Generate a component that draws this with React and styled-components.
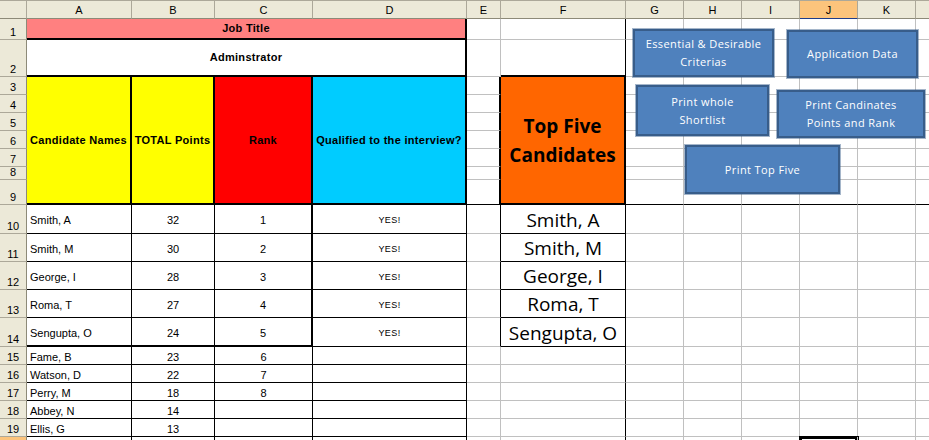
import React from 'react';
import styled, { createGlobalStyle } from 'styled-components';

const GlobalStyle = createGlobalStyle`
  html, body { margin: 0; padding: 0; background: #fff; overflow: hidden; }
  #root { width: 929px; height: 440px; overflow: hidden; }
`;

const COL_WIDTHS = [27, 105, 83, 98, 154, 34, 125, 58, 58, 58, 58, 58, 58];
const LETTERS = ['A', 'B', 'C', 'D', 'E', 'F', 'G', 'H', 'I', 'J', 'K', 'L'];
const ROW_HEIGHTS = [21, 37, 18, 18, 18, 18, 18, 13, 25, 29, 28, 28, 28, 29, 18, 18, 18, 18, 18, 18];
const VISIBLE_COLS = 11; // columns whose label is inside the 929px window
const VISIBLE_ROWS = 19; // rows whose label is inside the 440px window

const line = (v) =>
  v === 'thick' ? '2px solid #000' : v === 'thin' ? '1px solid #000' : v === 'none' ? '0' : '1px solid #c0c0c0';

const Canvas = styled.div`
  position: relative;
  width: 929px;
  height: 440px;
  overflow: hidden;
`;

const Sheet = styled.div`
  display: grid;
  grid-template-columns: ${COL_WIDTHS.map((w) => w + 'px').join(' ')};
  grid-template-rows: 19px ${ROW_HEIGHTS.map((h) => h + 'px').join(' ')};
  width: max-content;
  font-family: "Liberation Sans", Arial, sans-serif;
  color: #000;
`;

const HeadBase = styled.div`
  box-sizing: border-box;
  grid-row: ${(p) => p.$row};
  grid-column: ${(p) => p.$col};
  background: ${(p) => (p.$selected ? '#fcc47c' : '#ece9d8')};
  font-size: 11px;
  line-height: 13px;
  display: flex;
  justify-content: center;
`;

const Corner = styled(HeadBase)`
  border-right: 1px solid #aca899;
  border-bottom: 1px solid #8d8a78;
  border-top: 1px solid #aca899;
`;

const ColHeader = styled(HeadBase)`
  align-items: center;
  padding-top: 1px;
  border-top: 1px solid #aca899;
  border-right: 1px solid #aca899;
  border-bottom: 1px solid ${(p) => (p.$selected ? '#1f3c88' : '#8d8a78')};
`;

const RowHeader = styled(HeadBase)`
  align-items: flex-end;
  border-right: 1px solid #8d8a78;
  border-bottom: 1px solid #aca899;
`;

const Cell = styled.div`
  box-sizing: border-box;
  grid-row: ${(p) => p.$row} / span ${(p) => p.$rs || 1};
  grid-column: ${(p) => p.$col} / span ${(p) => p.$cs || 1};
  background: ${(p) => p.$bg || '#fff'};
  border-right: ${(p) => line(p.$r)};
  border-bottom: ${(p) => line(p.$b)};
  display: flex;
  align-items: center;
  justify-content: ${(p) => (p.$left ? 'flex-start' : 'center')};
  padding: 3px 3px 0;
  overflow: hidden;
  white-space: nowrap;
  font-size: 11px;
  line-height: 13px;
  position: ${(p) => (p.$active ? 'relative' : 'static')};
  z-index: ${(p) => (p.$active ? 2 : 'auto')};
  box-shadow: ${(p) => (p.$active ? '0 0 0 1px #000, inset 0 0 0 2px #000' : 'none')};
`;

const TitleCell = styled(Cell)`
  font-weight: bold;
  letter-spacing: 0.3px;
  padding-top: 0;
`;

const YesCell = styled(Cell)`
  font-size: 9px;
  letter-spacing: 0.4px;
`;

const TopFiveTitle = styled(Cell)`
  font-family: "Open Sans", sans-serif;
  font-weight: bold;
  font-size: 19px;
  line-height: 29px;
  white-space: normal;
  text-align: center;
  padding: 1px 0 0;
`;

const TopFiveCell = styled(Cell)`
  font-family: "Open Sans", sans-serif;
  font-size: 19px;
  line-height: 24px;
  padding: 1px 0 0;
`;

const ShapeButton = styled.div`
  position: absolute;
  left: ${(p) => p.$x}px;
  top: ${(p) => p.$y}px;
  width: ${(p) => p.$w}px;
  height: ${(p) => p.$h}px;
  box-sizing: border-box;
  background: #4f81bd;
  border: 2px solid #385d8a;
  box-shadow: 0 0 0 1px rgba(56, 93, 138, 0.45);
  color: #fff;
  font-family: "Open Sans", sans-serif;
  font-size: 11px;
  letter-spacing: 0.4px;
  line-height: 18px;
  display: flex;
  align-items: center;
  justify-content: center;
  text-align: center;
  white-space: pre-line;
`;

const candidates = [
  ['Smith, A', 32, 1],
  ['Smith, M', 30, 2],
  ['George, I', 28, 3],
  ['Roma, T', 27, 4],
  ['Sengupta, O', 24, 5],
  ['Fame, B', 23, 6],
  ['Watson, D', 22, 7],
  ['Perry, M', 18, 8],
  ['Abbey, N', 14, ''],
  ['Ellis, G', 13, ''],
];

const buttons = [
  { x: 633, y: 29, w: 141, h: 48, text: 'Essential & Desirable\nCriterias' },
  { x: 787, y: 30, w: 131, h: 48, text: 'Application Data' },
  { x: 636, y: 85, w: 133, h: 51, text: 'Print whole\nShortlist' },
  { x: 777, y: 90, w: 148, h: 48, text: 'Print Candinates\nPoints and Rank' },
  { x: 685, y: 145, w: 155, h: 49, text: 'Print Top Five' },
];

const col = (letter) => LETTERS.indexOf(letter) + 2;

function plain(r, letters, extra = {}) {
  return letters.map((l) => <Cell key={`${l}${r}`} $row={r + 1} $col={col(l)} {...(extra[l] || {})} />);
}

function buildRows() {
  const out = [];
  const rightSide = ['G', 'H', 'I', 'J', 'K', 'L'];
  for (let r = 1; r <= 20; r++) {
    const gr = r + 1;
    out.push(
      <RowHeader key={`h${r}`} $row={gr} $col={1} $selected={r === 20}>
        {r <= VISIBLE_ROWS ? r : null}
      </RowHeader>
    );
    if (r === 1) {
      out.push(
        <TitleCell key="A1" $row={gr} $col={2} $cs={4} $bg="#ff8080" $r="thick" $b="thick">
          Job Title
        </TitleCell>
      );
      out.push(...plain(r, ['E']), ...plain(r, ['F'], { F: { $r: 'thin' } }), ...plain(r, rightSide));
    } else if (r === 2) {
      out.push(
        <TitleCell key="A2" $row={gr} $col={2} $cs={4} $r="thick" $b="thick">
          Adminstrator
        </TitleCell>
      );
      out.push(...plain(r, ['E']), ...plain(r, ['F'], { F: { $r: 'thin', $b: 'thick' } }), ...plain(r, rightSide));
    } else if (r >= 3 && r <= 9) {
      if (r === 3) {
        const heads = [
          ['A', '#ffff00', 'Candidate Names'],
          ['B', '#ffff00', 'TOTAL Points'],
          ['C', '#ff0000', 'Rank'],
          ['D', '#00ccff', 'Qualified to the interview?'],
        ];
        heads.forEach(([l, bg, t]) =>
          out.push(
            <TitleCell key={`${l}3`} $row={gr} $col={col(l)} $rs={7} $bg={bg} $r="thick" $b="thick">
              {t}
            </TitleCell>
          )
        );
        out.push(
          <TopFiveTitle key="F3" $row={gr} $col={col('F')} $rs={7} $bg="#ff6600" $r="thick" $b="thick">
            Top Five
            <br />
            Candidates
          </TopFiveTitle>
        );
      }
      out.push(...plain(r, ['E'], { E: { $r: 'thick', $b: r === 9 ? 'thin' : undefined } }));
      const ex = {};
      if (r === 9) rightSide.forEach((l) => (ex[l] = { $b: 'thin' }));
      out.push(...plain(r, rightSide, ex));
    } else if (r >= 10 && r <= 19) {
      const [name, pts, rank] = candidates[r - 10];
      const top = r <= 14;
      const bottom = r === 14 ? 'thick' : 'thin';
      out.push(
        <Cell key={`A${r}`} $row={gr} $col={2} $left $r="thin" $b={bottom}>
          {name}
        </Cell>,
        <Cell key={`B${r}`} $row={gr} $col={3} $r="thin" $b={bottom}>
          {pts}
        </Cell>,
        <Cell key={`C${r}`} $row={gr} $col={4} $r={top ? 'thick' : 'thin'} $b={bottom}>
          {rank}
        </Cell>,
        <YesCell key={`D${r}`} $row={gr} $col={5} $r="thin" $b="thin">
          {top ? 'YES!' : ''}
        </YesCell>
      );
      out.push(...plain(r, ['E'], { E: top ? { $r: 'thin' } : {} }));
      if (top) {
        out.push(
          <TopFiveCell key={`F${r}`} $row={gr} $col={col('F')} $r="thin" $b="thin">
            {name}
          </TopFiveCell>
        );
      } else {
        out.push(...plain(r, ['F'], { F: { $r: 'thin' } }));
      }
      out.push(...plain(r, rightSide));
    } else {
      out.push(
        ...plain(r, ['A', 'B', 'C', 'D', 'E', 'F'], {
          A: { $r: 'thin' },
          B: { $r: 'thin' },
          C: { $r: 'thin' },
          D: { $r: 'thin' },
          F: { $r: 'thin' },
        }),
        ...plain(r, rightSide, { J: { $active: true } })
      );
    }
  }
  return out;
}

export default function App() {
  return (
    <>
      <GlobalStyle />
      <Canvas>
        <Sheet>
          <Corner $row={1} $col={1} />
          {LETTERS.map((l, i) => (
            <ColHeader key={l} $row={1} $col={i + 2} $selected={l === 'J'}>
              {i < VISIBLE_COLS ? l : null}
            </ColHeader>
          ))}
          {buildRows()}
        </Sheet>
        {buttons.map((b) => (
          <ShapeButton key={b.text} $x={b.x} $y={b.y} $w={b.w} $h={b.h}>
            {b.text}
          </ShapeButton>
        ))}
      </Canvas>
    </>
  );
}
